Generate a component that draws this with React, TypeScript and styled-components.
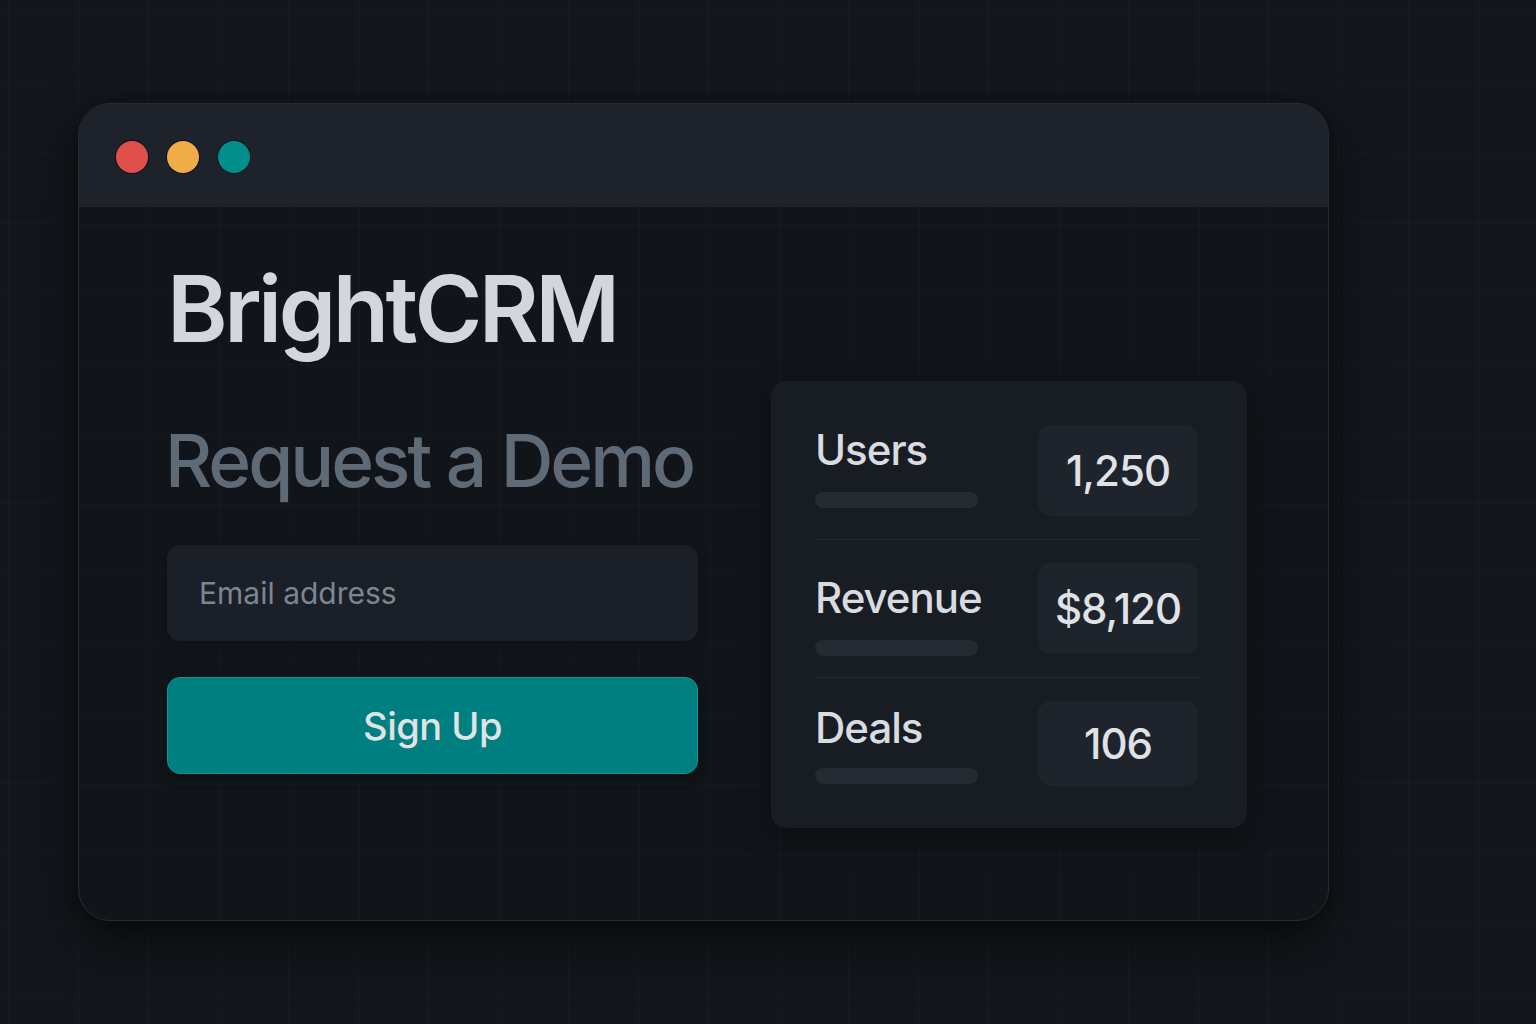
import React from 'react';
import styled, { createGlobalStyle } from 'styled-components';

const GlobalStyle = createGlobalStyle`
  html, body {
    margin: 0;
    padding: 0;
    height: 100%;
  }

  body {
    background-color: #13161b;
    background-image:
      linear-gradient(rgba(40, 70, 80, 0.12) 1px, transparent 1px),
      linear-gradient(90deg, rgba(40, 70, 80, 0.12) 1px, transparent 1px);
    background-size: 70px 70px;
    background-position: 8px 13px;
    font-family: Inter, "Noto Sans", sans-serif;
    -webkit-font-smoothing: antialiased;
  }
`;

const Page = styled.div`
  width: 1536px;
  height: 1024px;
  padding: 103px 0 0 78px;
  box-sizing: border-box;
`;

const Window = styled.div`
  width: 1251px;
  height: 818px;
  border-radius: 32px;
  border: 1px solid #262c35;
  box-sizing: border-box;
  overflow: hidden;
  background-color: #111419;
  background-image:
    linear-gradient(rgba(40, 70, 80, 0.1) 1px, transparent 1px),
    linear-gradient(90deg, rgba(40, 70, 80, 0.1) 1px, transparent 1px);
  background-size: 70px 70px;
  background-position: -70px -90px;
  box-shadow: 0 24px 60px rgba(0, 0, 0, 0.45), 0 4px 14px rgba(0, 0, 0, 0.3);
  display: flex;
  flex-direction: column;
`;

const TitleBar = styled.div`
  height: 103px;
  flex-shrink: 0;
  background: #1d222b;
  display: flex;
  align-items: center;
  gap: 19px;
  padding: 2px 0 0 37px;
  box-sizing: border-box;
`;

const Dot = styled.span<{ $color: string }>`
  width: 32px;
  height: 32px;
  border-radius: 50%;
  background: ${({ $color }) => $color};
  box-shadow: 0 0 0 1px rgba(10, 10, 30, 0.6);
`;

const Body = styled.div`
  display: flex;
  gap: 73px;
  padding: 42px 0 0 88px;
`;

const LeftCol = styled.div`
  width: 531px;
  display: flex;
  flex-direction: column;
`;

const Brand = styled.h1`
  margin: 0;
  font-size: 92px;
  font-weight: 600;
  letter-spacing: -3.5px;
  line-height: 120px;
  color: #d3d6db;
  white-space: nowrap;
`;

const Subtitle = styled.h2`
  margin: 48px 0 0 -2px;
  font-size: 73px;
  font-weight: 500;
  letter-spacing: -3px;
  line-height: 88px;
  color: #5f6a77;
  white-space: nowrap;
`;

const EmailInput = styled.input`
  margin-top: 40px;
  height: 96px;
  border: none;
  border-radius: 13px;
  background: #1b1f27;
  padding: 0 32px;
  font-family: Inter, "Noto Sans", sans-serif;
  font-size: 30px;
  color: #c8ccd2;
  box-sizing: border-box;
  outline: none;
  box-shadow: 0 4px 12px rgba(0, 0, 0, 0.25);

  &::placeholder {
    color: #7c8691;
  }
`;

const SignUpButton = styled.button`
  margin-top: 36px;
  height: 97px;
  border: 1px solid #0a9a99;
  border-radius: 13px;
  background: #007f80;
  font-family: Inter, "Noto Sans", sans-serif;
  font-size: 38px;
  font-weight: 500;
  letter-spacing: -0.5px;
  color: #e0e3e6;
  cursor: pointer;
  box-shadow: 0 4px 12px rgba(0, 0, 0, 0.3);
`;

const StatsCard = styled.div`
  margin-top: 132px;
  width: 476px;
  align-self: flex-start;
  background: #181c23;
  border-radius: 15px;
  padding: 44px 49px 42px 44px;
  box-sizing: border-box;
  box-shadow: 0 10px 30px rgba(0, 0, 0, 0.35);
  display: flex;
  flex-direction: column;
`;

const StatRow = styled.div<{ $height: number }>`
  height: ${({ $height }) => $height}px;
  display: flex;
  justify-content: space-between;
  align-items: stretch;
`;

const LabelCol = styled.div<{ $shift: number; $bottom: number }>`
  display: flex;
  flex-direction: column;
  justify-content: space-between;
  width: 163px;
  padding-top: ${({ $shift }) => $shift}px;
  margin-bottom: ${({ $bottom }) => $bottom}px;
`;

const StatLabel = styled.div`
  font-size: 42px;
  font-weight: 500;
  letter-spacing: -1px;
  line-height: 50px;
  color: #d8dbe0;
  white-space: nowrap;
`;

const StatBar = styled.div`
  height: 16px;
  border-radius: 8px;
  background: #252a33;
`;

const ValueBox = styled.div`
  width: 160px;
  border-radius: 13px;
  background: #1f242c;
  display: flex;
  align-items: center;
  justify-content: center;
  font-size: 42px;
  font-weight: 500;
  letter-spacing: -1px;
  color: #dfe2e6;
`;

const Divider = styled.div`
  height: 1px;
  background: #242a32;
  margin: 23px -4px 23px 0;
`;

const stats = [
  { label: 'Users', value: '1,250', height: 91, shift: 0, bottom: 8 },
  { label: 'Revenue', value: '$8,120', height: 91, shift: 10, bottom: -2 },
  { label: 'Deals', value: '106', height: 85, shift: 2, bottom: 2 },
];

const App: React.FC = () => {
  return (
    <>
      <GlobalStyle />
      <Page>
        <Window>
          <TitleBar>
            <Dot $color="#e0504a" />
            <Dot $color="#f0ac46" />
            <Dot $color="#008f8c" />
          </TitleBar>
          <Body>
            <LeftCol>
              <Brand>BrightCRM</Brand>
              <Subtitle>Request a Demo</Subtitle>
              <EmailInput type="email" placeholder="Email address" />
              <SignUpButton type="button">Sign Up</SignUpButton>
            </LeftCol>
            <StatsCard>
              {stats.map((s, i) => (
                <React.Fragment key={s.label}>
                  {i > 0 && <Divider />}
                  <StatRow $height={s.height}>
                    <LabelCol $shift={s.shift} $bottom={s.bottom}>
                      <StatLabel>{s.label}</StatLabel>
                      <StatBar />
                    </LabelCol>
                    <ValueBox>{s.value}</ValueBox>
                  </StatRow>
                </React.Fragment>
              ))}
            </StatsCard>
          </Body>
        </Window>
      </Page>
    </>
  );
};

export default App;
